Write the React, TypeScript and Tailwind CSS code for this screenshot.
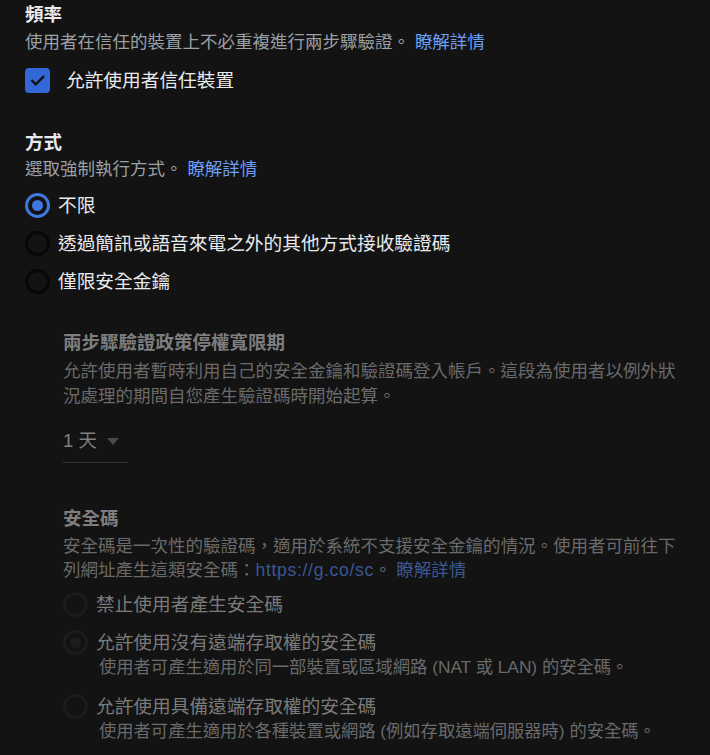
import React from "react";

const font = { fontFamily: '"Liberation Sans", "Noto Sans CJK TC", sans-serif' };

function Radio({ checked, disabled }: { checked?: boolean; disabled?: boolean }) {
  if (disabled) {
    return (
      <span className="flex h-[25px] w-[25px] shrink-0 items-center justify-center rounded-full border-[3px] border-[#1c1c1c]">
        {checked && <span className="h-[11px] w-[11px] rounded-full bg-[#1c1c1c]" />}
      </span>
    );
  }
  return (
    <span
      className={
        "flex h-[25px] w-[25px] shrink-0 items-center justify-center rounded-full border-[3px] " +
        (checked ? "border-[#3f78e0]" : "border-[#070707]")
      }
    >
      {checked && <span className="h-[11px] w-[11px] rounded-full bg-[#3f78e0]" />}
    </span>
  );
}

export default function App() {
  return (
    <div className="min-h-screen bg-[#131313] pl-[25px] pt-[3px]" style={font}>
      <h2 className="text-[18.5px] font-bold leading-[24px] text-[#e8eaed]">頻率</h2>
      <p className="mt-[3px] text-[17.5px] leading-[24px] text-[#9aa0a6]">
        使用者在信任的裝置上不必重複進行兩步驟驗證。 <span className="text-[#6a9ef8]">瞭解詳情</span>
      </p>
      <label className="mt-[14px] flex h-[25px] items-center gap-[16px]">
        <span className="flex h-[25px] w-[25px] items-center justify-center rounded-[4px] bg-[#3367d6]">
          <svg width="17" height="17" viewBox="0 0 24 24" fill="none" stroke="#111" strokeWidth="3.4" strokeLinecap="square">
            <path d="M4.5 12.5l5 5L20 7" />
          </svg>
        </span>
        <span className="text-[18.7px] leading-[25px] text-[#e8eaed]">允許使用者信任裝置</span>
      </label>

      <h2 className="mt-[38px] text-[18.5px] font-bold leading-[24px] text-[#e8eaed]">方式</h2>
      <p className="mt-[2px] text-[17.5px] leading-[24px] text-[#9aa0a6]">
        選取強制執行方式。 <span className="text-[#6a9ef8]">瞭解詳情</span>
      </p>
      <div className="mt-[12px] flex flex-col gap-[13px]">
        <div className="flex h-[25px] items-center gap-[8px]">
          <Radio checked />
          <span className="text-[18.7px] leading-[25px] text-[#e8eaed]">不限</span>
        </div>
        <div className="flex h-[25px] items-center gap-[8px]">
          <Radio />
          <span className="text-[18.7px] leading-[25px] text-[#e8eaed]">透過簡訊或語音來電之外的其他方式接收驗證碼</span>
        </div>
        <div className="flex h-[25px] items-center gap-[8px]">
          <Radio />
          <span className="text-[18.7px] leading-[25px] text-[#e8eaed]">僅限安全金鑰</span>
        </div>
      </div>

      <div className="ml-[38px] pr-[30px]">
        <h3 className="mt-[37px] text-[18.5px] font-bold leading-[24px] text-[#7e7e7e]">兩步驟驗證政策停權寬限期</h3>
        <p className="mt-[4px] text-[17.5px] leading-[25px] text-[#6a6a6a]">
          允許使用者暫時利用自己的安全金鑰和驗證碼登入帳戶。這段為使用者以例外狀況處理的期間自您產生驗證碼時開始起算。
        </p>
        <div className="mt-[17px] flex w-[65px] items-center border-b border-[#333] pb-[6px]">
          <span className="text-[18.5px] leading-[30px] text-[#808080]">1 天</span>
          <svg className="ml-[10px]" width="12" height="7" viewBox="0 0 12 7">
            <path d="M0 0h12L6 7z" fill="#4a4a4a" />
          </svg>
        </div>

        <h3 className="mt-[44px] text-[18.5px] font-bold leading-[24px] text-[#7e7e7e]">安全碼</h3>
        <p className="mt-[3px] text-[17.5px] leading-[24px] text-[#6a6a6a]">
          安全碼是一次性的驗證碼，適用於系統不支援安全金鑰的情況。使用者可前往下列網址產生這類安全碼：
          <span className="tracking-[0.7px] text-[#3b5894]">https://g.co/sc</span>。{" "}
          <span className="text-[#3b5894]">瞭解詳情</span>
        </p>

        <div className="mt-[10px] flex h-[25px] items-center gap-[8px]">
          <Radio disabled />
          <span className="text-[18.7px] leading-[25px] text-[#7a7a7a]">禁止使用者產生安全碼</span>
        </div>
        <div className="mt-[13px] flex items-start gap-[8px]">
          <Radio disabled checked />
          <div>
            <div className="text-[18.7px] leading-[25px] text-[#7a7a7a]">允許使用沒有遠端存取權的安全碼</div>
            <div className="pl-[3px] text-[17.3px] leading-[25px] text-[#6a6a6a]">
              使用者可產生適用於同一部裝置或區域網路 (NAT 或 LAN) 的安全碼。
            </div>
          </div>
        </div>
        <div className="mt-[14px] flex items-start gap-[8px]">
          <Radio disabled />
          <div>
            <div className="text-[18.7px] leading-[25px] text-[#7a7a7a]">允許使用具備遠端存取權的安全碼</div>
            <div className="pl-[3px] text-[17.3px] leading-[25px] text-[#6a6a6a]">
              使用者可產生適用於各種裝置或網路 (例如存取遠端伺服器時) 的安全碼。
            </div>
          </div>
        </div>
      </div>
    </div>
  );
}
